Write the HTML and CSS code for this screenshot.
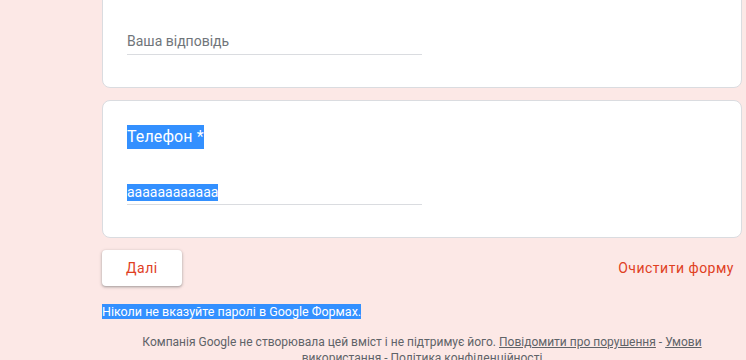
FILE: index.html
```html
<!DOCTYPE html>
<html lang="uk">
<head>
  <meta charset="UTF-8">
  <meta name="viewport" content="width=device-width, initial-scale=1.0">
  <title>Google Форми</title>
  <link rel="stylesheet" href="styles.css">
</head>
<body>
  <div class="form">
    <div class="card">
      <div class="question">Ім'я <span class="req">*</span></div>
      <div class="answer"><span class="placeholder">Ваша відповідь</span></div>
    </div>

    <div class="card">
      <div class="question"><span class="sel sel-title">Телефон *</span></div>
      <div class="answer"><span class="sel sel-input">аааааааааааа </span></div>
    </div>

    <div class="actions">
      <button class="btn-next">Далі</button>
      <button class="btn-clear">Очистити форму</button>
    </div>

    <p class="warning"><span class="sel">Ніколи не вказуйте паролі в Google Формах.</span></p>

    <p class="footer">
      Компанія Google не створювала цей вміст і не підтримує його.
      <a href="#">Повідомити про порушення</a> - <a href="#">Умови використання</a> - <a href="#">Політика конфіденційності</a>
    </p>
  </div>
</body>
</html>
```

FILE: styles.css
```css
body {
  font-family: Roboto, "Noto Sans", sans-serif;
  margin: 0;
  background: #fce8e6;
  color: #202124;
}

.form {
  width: 640px;
  margin: -50px 0 0 102px;
}

.card {
  background: white;
  border: 1px solid #dadce0;
  border-radius: 8px;
  padding: 24px;
  margin-bottom: 12px;
}

.question {
  font-size: 16px;
  line-height: 24px;
  letter-spacing: 0.1px;
}

.req {
  color: #d93025;
}

.answer {
  width: 50%;
  margin-top: 31px;
  margin-bottom: 8px;
  font-size: 14px;
  line-height: 23px;
  padding-bottom: 1px;
  border-bottom: 1px solid #dadce0;
}

.placeholder {
  color: #70757a;
}

.sel {
  background: #3390ff;
  color: white;
}

.sel-title {
  display: inline-block;
  line-height: 24px;
}

.sel-input {
  display: inline-block;
  line-height: 17px;
  vertical-align: middle;
}

.actions {
  display: flex;
  justify-content: space-between;
  align-items: center;
}

.actions button {
  font-family: Roboto, "Noto Sans", sans-serif;
  font-size: 14px;
  letter-spacing: 0.5px;
  color: #e0401f;
  border: none;
  cursor: pointer;
}

.btn-next {
  background: white;
  height: 36px;
  padding: 0 24px;
  border-radius: 4px;
  box-shadow: 0 1px 2px rgba(60,64,67,0.3), 0 1px 3px 1px rgba(60,64,67,0.15);
}

.btn-clear {
  background: none;
  padding: 0 8px;
  height: 36px;
}

.warning {
  margin: 18px 0 0;
  font-size: 12.5px;
  line-height: 15px;
}

.footer {
  margin: 15px 0 0;
  font-size: 12px;
  line-height: 16px;
  color: #5f6368;
  text-align: center;
}

.footer a {
  color: #5f6368;
}
```
